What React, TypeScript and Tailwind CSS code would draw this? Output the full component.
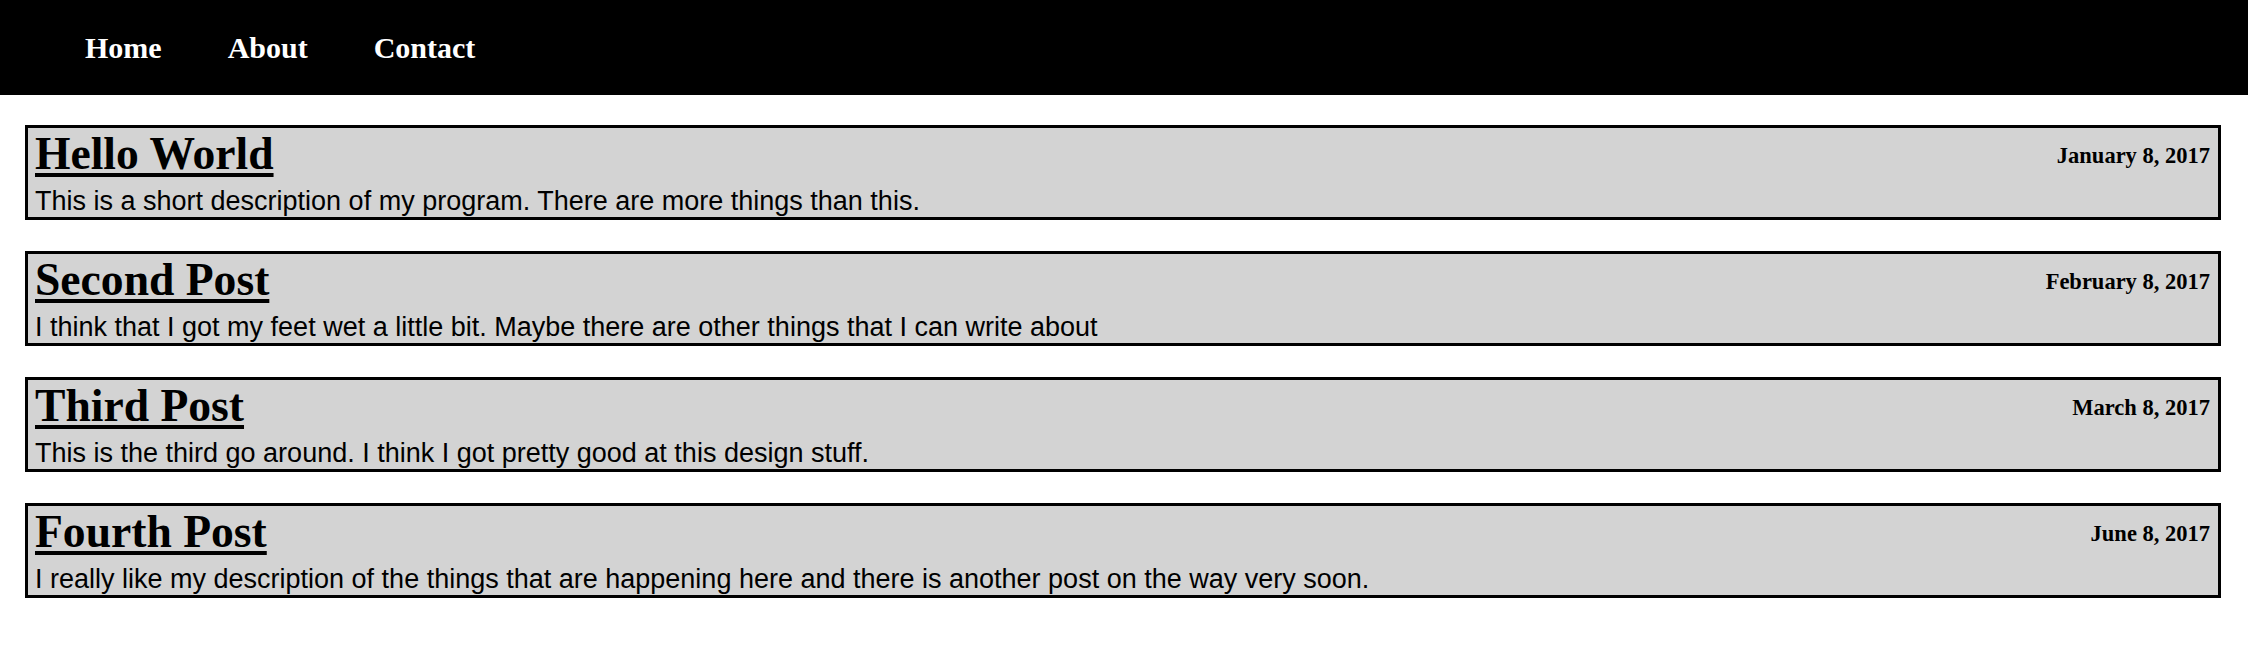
import React from "react";

const posts = [
  {
    title: "Hello World",
    date: "January 8, 2017",
    text: "This is a short description of my program. There are more things than this.",
  },
  {
    title: "Second Post",
    date: "February 8, 2017",
    text: "I think that I got my feet wet a little bit. Maybe there are other things that I can write about",
  },
  {
    title: "Third Post",
    date: "March 8, 2017",
    text: "This is the third go around. I think I got pretty good at this design stuff.",
  },
  {
    title: "Fourth Post",
    date: "June 8, 2017",
    text: "I really like my description of the things that are happening here and there is another post on the way very soon.",
  },
];

export default function App() {
  return (
    <div className="min-h-[663px] w-full bg-white">
      <nav className="flex h-[95px] items-center gap-[66px] bg-black pl-[85px]">
        {["Home", "About", "Contact"].map((n) => (
          <a
            key={n}
            href="#"
            className="text-[30px] font-bold leading-normal text-white [font-family:'Liberation_Serif',serif]"
          >
            {n}
          </a>
        ))}
      </nav>
      <main className="flex flex-col gap-[31px] pl-[25px] pr-[27px] pt-[30px]">
        {posts.map((p) => (
          <article
            key={p.title}
            className="border-[3px] border-black bg-[#d3d3d3] px-[7px]"
          >
            <div className="flex items-start justify-between">
              <h1 className="text-[45.6px] font-bold leading-[52px] text-black underline decoration-[4px] underline-offset-[4px] [font-family:'Liberation_Serif',serif]">
                {p.title}
              </h1>
              <span className="mt-[11px] pr-[1px] text-[22.5px] font-bold leading-normal text-black [font-family:'Liberation_Serif',serif]">
                {p.date}
              </span>
            </div>
            <p className="mt-[6px] text-[27px] leading-[31px] text-black [font-family:'Liberation_Sans',Arial,sans-serif]">
              {p.text}
            </p>
          </article>
        ))}
      </main>
    </div>
  );
}
